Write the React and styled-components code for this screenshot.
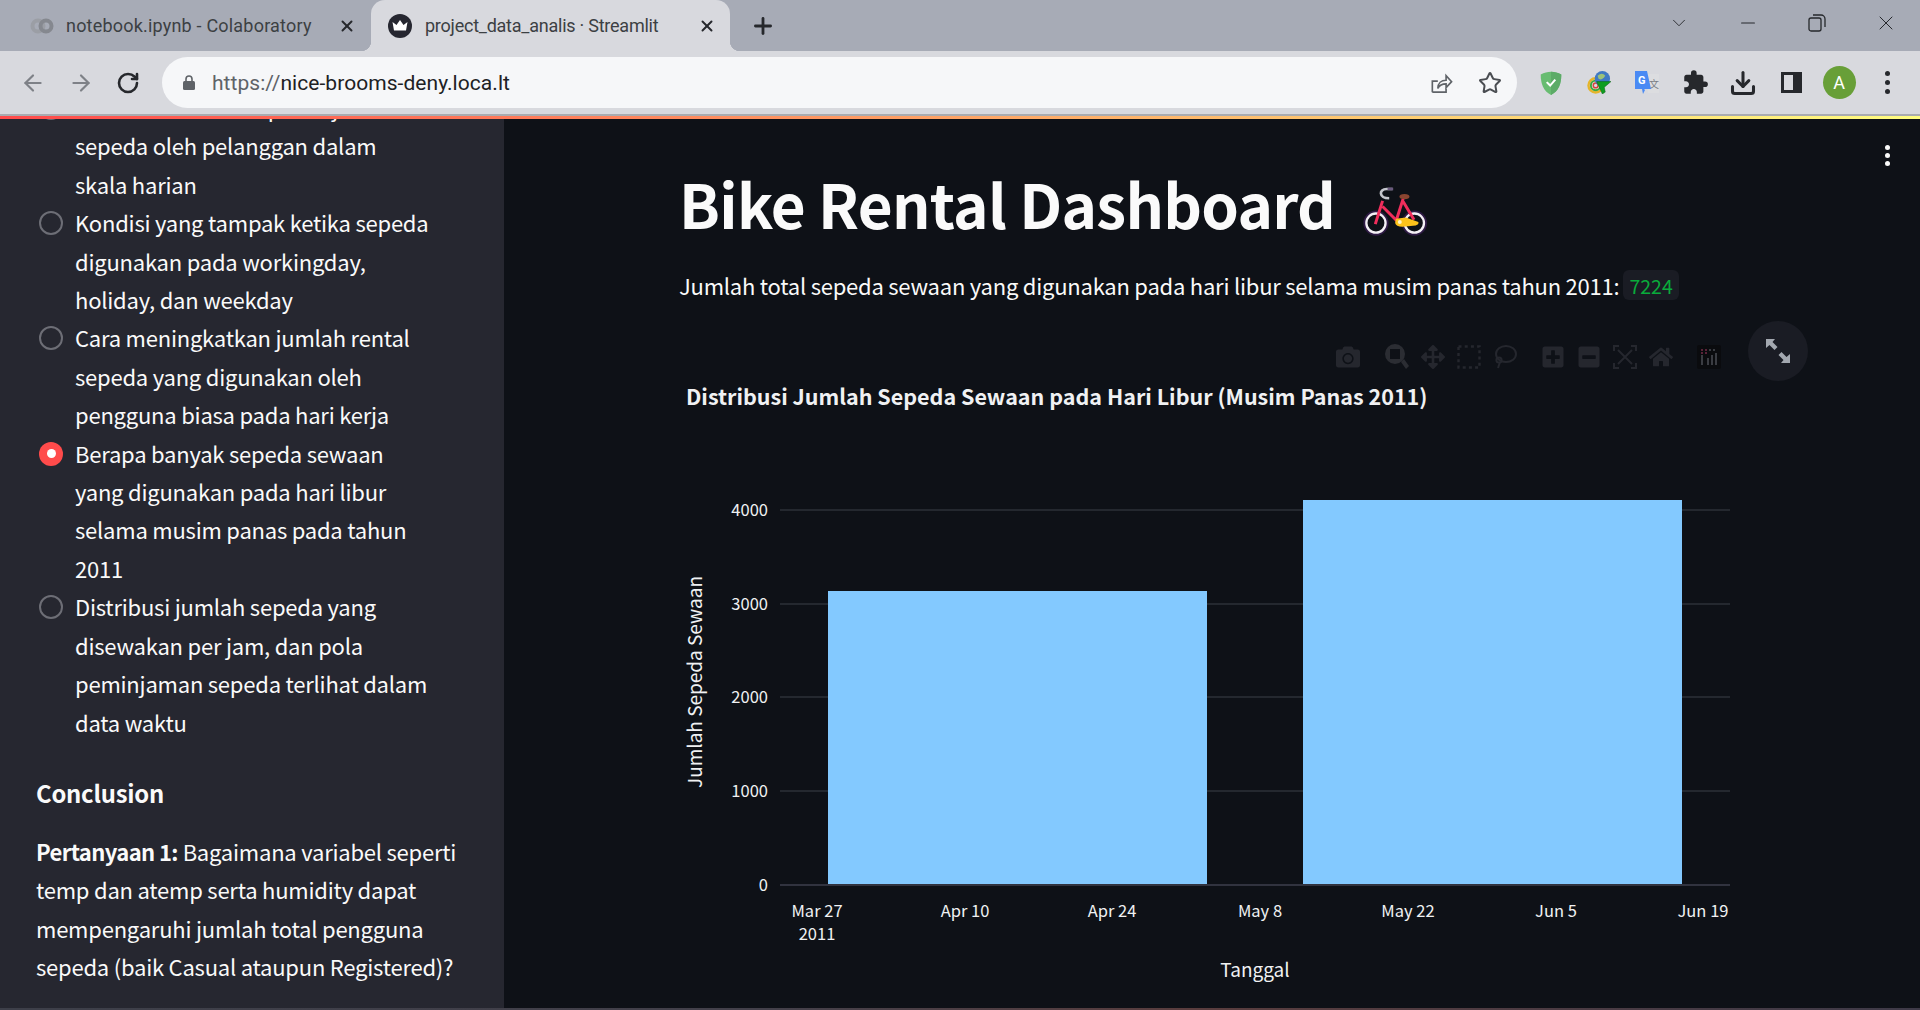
import React from 'react';
import styled, { createGlobalStyle } from 'styled-components';
import { ArrowLeft, ArrowRight, RotateCw, Star, Download, X, Plus, Minus, ChevronDown } from 'lucide-react';
import { FaCamera, FaArrowsAlt, FaPlusSquare, FaMinusSquare, FaHome } from 'react-icons/fa';
import { MdExtension } from 'react-icons/md';

const sansFont = '"Noto Sans CJK SC", "Noto Sans", sans-serif';

const GlobalStyle = createGlobalStyle`
    html, body {
        margin: 0;
        padding: 0;
        height: 100%;
        overflow: hidden;
        background: #0e1117;
    }
`

const Page = styled.div`
    display: flex;
    flex-direction: column;
    height: 1010px;
    overflow: hidden;
`

const TabStrip = styled.div`
    display: flex;
    align-items: stretch;
    height: 51px;
    background: #a7abb6;
    font-family: Roboto, sans-serif;
    font-size: 18px;
    color: #3c4043;
`

const Tab = styled.div`
    position: relative;
    display: flex;
    align-items: center;
    box-sizing: border-box;
    width: ${(props) => props.$width}px;
    padding-left: ${(props) => props.$pad}px;
    padding-right: ${(props) => props.$padRight}px;
    border-radius: 14px 14px 0 0;
    background: ${(props) => (props.$active ? '#d8d9de' : 'transparent')};

    ${(props) => props.$active && `
        &::before, &::after {
            content: '';
            position: absolute;
            bottom: 0;
            width: 10px;
            height: 10px;
        }
        &::before {
            left: -10px;
            background: radial-gradient(circle at 0 0, transparent 10px, #d8d9de 10.5px);
        }
        &::after {
            right: -10px;
            background: radial-gradient(circle at 100% 0, transparent 10px, #d8d9de 10.5px);
        }
    `}
`

const TabTitle = styled.span`
    flex: 1;
    margin-left: ${(props) => props.$gap}px;
    letter-spacing: ${(props) => props.$spacing}px;
    white-space: nowrap;
`

const NewTab = styled.div`
    display: flex;
    align-items: center;
    margin-left: 20px;
    color: #26282c;
`

const WindowButtons = styled.div`
    display: flex;
    align-items: center;
    margin-left: auto;
    padding-bottom: 5px;
    color: #26282c;
`

const WindowButton = styled.div`
    display: flex;
    justify-content: center;
    width: 69px;
`

const Toolbar = styled.div`
    display: flex;
    align-items: center;
    height: 63px;
    background: #d8d9de;
`

const NavButtons = styled.div`
    display: flex;
    align-items: center;
    gap: 22px;
    width: 162px;
    box-sizing: border-box;
    padding-left: 20px;
    color: #7e8187;
`

const Omnibox = styled.div`
    display: flex;
    align-items: center;
    width: 1355px;
    height: 51px;
    box-sizing: border-box;
    padding: 0 15px 0 21px;
    border-radius: 26px;
    background: #f6f7f9;
    font-family: Roboto, sans-serif;
    font-size: 21px;
    color: #202124;
`

const Url = styled.span`
    flex: 1;
    margin-left: 17px;
    letter-spacing: 0.05px;

    span {
        color: #5f6368;
    }
`

const OmniIcons = styled.div`
    display: flex;
    align-items: center;
    gap: 25px;
    color: #5f6368;
`

const Extensions = styled.div`
    display: flex;
    align-items: center;
    padding-left: 10px;
    color: #26282c;
`

const Slot = styled.div`
    display: flex;
    align-items: center;
    justify-content: center;
    width: 48px;
`

const Avatar = styled.div`
    display: flex;
    align-items: center;
    justify-content: center;
    width: 33px;
    height: 33px;
    border-radius: 50%;
    background: #689f38;
    color: #fff;
    font-family: Roboto, sans-serif;
    font-size: 18px;
`

const DotsColumn = styled.div`
    display: flex;
    flex-direction: column;
    gap: ${(props) => props.$gap}px;

    i {
        width: 5px;
        height: 5px;
        border-radius: 50%;
        background: ${(props) => props.$color};
    }
`

const Separator = styled.div`
    height: 2px;
    background: #a9abb0;
`

const Decoration = styled.div`
    height: 3px;
    background: linear-gradient(90deg, #ff4b4b, #fffd80);
`

const Body = styled.div`
    flex: 1;
    display: flex;
    min-height: 0;
    font-family: ${sansFont};
    color: #fafafa;
`

const BottomEdge = styled.div`
    height: 2px;
    background: linear-gradient(90deg, #3d3f49, #43404a 40%, #5a3d3e 62%, #3e3a48);
`

const Sidebar = styled.aside`
    width: 504px;
    flex-shrink: 0;
    overflow: hidden;
    background: #262730;
    font-size: 22px;
    letter-spacing: -0.22px;
    line-height: 38.4px;
`

const SidebarContent = styled.div`
    margin-top: -31px;
    padding-left: 36px;
`

const OptionList = styled.div`
    padding-left: 3px;
`

const Option = styled.div`
    display: flex;
`

const Radio = styled.div`
    flex-shrink: 0;
    display: flex;
    align-items: center;
    justify-content: center;
    box-sizing: border-box;
    width: 24px;
    height: 24px;
    margin-top: 8px;
    margin-right: 12px;
    border-radius: 50%;
    border: ${(props) => (props.$checked ? 'none' : '2px solid #6d6e76')};
    background: ${(props) => (props.$checked ? '#ff4b4b' : 'transparent')};

    &::after {
        content: '';
        display: ${(props) => (props.$checked ? 'block' : 'none')};
        width: 9px;
        height: 9px;
        border-radius: 50%;
        background: #fff;
    }
`

const OptionLines = styled.div`
    span {
        display: block;
        white-space: nowrap;
    }
`

const SidebarHeading = styled.h3`
    margin: 33px 0 20px;
    font-size: 23.8px;
    line-height: 38px;
    font-weight: 600;
`

const SidebarText = styled.p`
    margin: 0;

    span {
        display: block;
        white-space: nowrap;
    }

    b {
        font-weight: 700;
        letter-spacing: -0.6px;
    }
`

const Main = styled.main`
    position: relative;
    flex: 1;
    min-width: 0;
    padding: 46px 0 0 175px;
    background: #0e1117;
`

const MenuWrap = styled.div`
    position: absolute;
    top: 26px;
    right: 30px;
`

const Title = styled.h1`
    display: flex;
    align-items: center;
    height: 80px;
    margin: -2px 0 24px;
    font-size: 60.2px;
    font-weight: 700;
    letter-spacing: -0.7px;
    line-height: 80px;
    white-space: nowrap;

    svg {
        margin-left: 26px;
        margin-top: 16px;
    }
`

const Summary = styled.p`
    display: flex;
    align-items: center;
    height: 38px;
    margin: -1px 0 26px;
    font-size: 22px;
    letter-spacing: -0.23px;
    white-space: nowrap;
`

const Code = styled.code`
    margin-left: 4px;
    padding: 0 6px;
    height: 30px;
    border-radius: 6px;
    background: #1a1c24;
    color: #09ab3b;
    font-family: ${sansFont};
    font-size: 19.5px;
    letter-spacing: 0;
    line-height: 32px;
`

const ChartBox = styled.div`
    position: relative;
    width: 1120px;
    height: 676px;
    margin-left: 1px;

    svg.plot {
        display: block;
    }

    text {
        font-family: ${sansFont};
        fill: #f0f1f3;
    }
`

const Modebar = styled.div`
    position: absolute;
    top: 14px;
    left: 656px;
    display: flex;
    align-items: center;
    color: #25272e;
`

const ModeIcon = styled.div`
    display: flex;
    align-items: center;
    justify-content: center;
    width: ${(props) => props.$w || 36}px;
    margin-right: ${(props) => props.$after || 0}px;
`

const Fullscreen = styled.div`
    position: absolute;
    top: -9px;
    right: -8px;
    display: flex;
    align-items: center;
    justify-content: center;
    width: 60px;
    height: 60px;
    border-radius: 50%;
    background: #1a1c24;
    color: #a3a8b0;
`

const options = [
    { lines: ['Tren dan musiman peminjaman', 'sepeda oleh pelanggan dalam', 'skala harian'] },
    { lines: ['Kondisi yang tampak ketika sepeda', 'digunakan pada workingday,', 'holiday, dan weekday'] },
    { lines: ['Cara meningkatkan jumlah rental', 'sepeda yang digunakan oleh', 'pengguna biasa pada hari kerja'] },
    { lines: ['Berapa banyak sepeda sewaan', 'yang digunakan pada hari libur', 'selama musim panas pada tahun', '2011'], checked: true },
    { lines: ['Distribusi jumlah sepeda yang', 'disewakan per jam, dan pola', 'peminjaman sepeda terlihat dalam', 'data waktu'] },
];

const gridLines = [
    { y: 510, label: '4000' },
    { y: 604, label: '3000' },
    { y: 697, label: '2000' },
    { y: 791, label: '1000' },
];

const xTicks = [
    { x: 817, label: 'Mar 27' },
    { x: 965, label: 'Apr 10' },
    { x: 1112, label: 'Apr 24' },
    { x: 1260, label: 'May 8' },
    { x: 1408, label: 'May 22' },
    { x: 1556, label: 'Jun 5' },
    { x: 1703, label: 'Jun 19' },
];

const ColabIcon = () => (
    <svg width="24" height="16" viewBox="0 0 24 16" fill="none">
        <circle cx="8" cy="8" r="5.5" stroke="#9b9ea5" strokeWidth="4" />
        <circle cx="16" cy="8" r="5.5" stroke="#85888f" strokeWidth="4" />
    </svg>
);

const StreamlitIcon = () => (
    <svg width="24" height="24" viewBox="0 0 24 24">
        <circle cx="12" cy="12" r="12" fill="#262730" />
        <path d="M4.500 8l4 3L12 6l3.500 5 4-3-1.500 8.500H6z" fill="#fff" />
    </svg>
);

const LockIcon = () => (
    <svg width="12" height="15" viewBox="0 0 12 15">
        <path d="M3 6V4a3 3 0 0 1 6 0v2" fill="none" stroke="#5f6368" strokeWidth="1.6" />
        <rect y="6" width="12" height="9" rx="1.500" fill="#5f6368" />
    </svg>
);

const ShareIcon = () => (
    <svg width="23" height="22" viewBox="0 0 24 24" fill="none" stroke="#5f6368" strokeWidth="1.8">
        <path d="M2 22V10h6M2 22h15v-4" />
        <path d="M8 18c0-6 4-9 9-9V4l6 6.500-6 6.500v-4c-4 0-7 1-9 5z" />
    </svg>
);

const ShieldIcon = () => (
    <svg width="24" height="24" viewBox="0 0 24 28">
        <path d="M12 1c4 0 8 1 12 3 0 11-3 19-12 24C3 23 0 15 0 4c4-2 8-3 12-3z" fill="#68bc71" />
        <path d="M12 1c4 0 8 1 12 3 0 11-3 19-12 24z" fill="#5cab67" />
        <path d="M7 13l4 4 6-7" fill="none" stroke="#fff" strokeWidth="2.4" />
    </svg>
);

const IdmIcon = () => (
    <svg width="25" height="23" viewBox="0 0 26 24">
        <circle cx="9" cy="15" r="7.500" fill="none" stroke="#e5b52a" strokeWidth="2.5" />
        <circle cx="9" cy="15" r="5" fill="none" stroke="#3da83a" strokeWidth="2" />
        <circle cx="9" cy="15" r="2.500" fill="none" stroke="#d8453a" strokeWidth="1.5" />
        <circle cx="16" cy="8" r="8" fill="#3f79c4" />
        <path d="M11 5c3-3 6-3 8 0-2 3-4 5-7 3z" fill="#9cc27a" />
        <path d="M10 11h15l-7 6 1 5-3 2z" fill="#0f9d20" stroke="#0b5f14" strokeWidth="0.5" />
    </svg>
);

const TranslateIcon = () => (
    <svg width="24" height="24" viewBox="0 0 24 24">
        <path d="M11 3h13v19H13z" fill="#dcdde0" />
        <text x="14" y="17" fontSize="10" fontFamily="Noto Sans CJK SC, sans-serif" fill="#7a7d85">文</text>
        <path d="M0 0h12l4 18H9l1 1-2 4-1-5H0z" fill="#4a8af4" />
        <text x="3" y="13" fontSize="11" fontWeight="700" fontFamily="Roboto, sans-serif" fill="#fff">G</text>
    </svg>
);

const SidePanelIcon = () => (
    <svg width="21" height="21" viewBox="0 0 21 21">
        <path d="M0 0h21v21H0z" fill="#26282c" />
        <path d="M3 3h9v15H3z" fill="#d8d9de" />
    </svg>
);

const BikeEmoji = () => (
    <svg width="68" height="53" viewBox="65 30 205 160" fill="none">
        <circle cx="110" cy="145" r="33" stroke="#2f1b45" strokeWidth="10" />
        <circle cx="110" cy="145" r="29" stroke="#f4f0f6" strokeWidth="7" />
        <circle cx="226" cy="145" r="33" stroke="#2f1b45" strokeWidth="10" />
        <circle cx="226" cy="145" r="29" stroke="#f4f0f6" strokeWidth="7" />
        <path d="M108 148L130 78M130 95L175 140M192 72L172 135M192 80L225 135" stroke="#f02d5b" strokeWidth="9" />
        <path d="M160 42H142C118 42 118 70 150 70" stroke="#c4c6cc" strokeWidth="8" />
        <path d="M145 42h17" stroke="#6a5a7e" strokeWidth="8" />
        <ellipse cx="196" cy="65" rx="15" ry="8" fill="#8a4530" />
        <path d="M170 132L200 128L238 142Q240 150 230 152L190 156Q170 156 168 145Z" fill="#fcc21b" />
        <circle cx="182" cy="142" r="6" fill="#fff3c4" />
    </svg>
);

const ZoomTool = () => (
    <svg width="24" height="26" viewBox="0 0 24 26" fill="#2b2d33">
        <path d="M10 0a10 10 0 1 0 0 20 10 10 0 0 0 0-20zM5 5h10v10H5z" fillRule="evenodd" />
        <path d="M16 18l3-3 5 7-3 3z" />
    </svg>
);

const BoxSelect = () => (
    <svg width="24" height="24" viewBox="0 0 24 24" fill="none" stroke="#25272e" strokeWidth="2.4" strokeDasharray="3 3.2">
        <rect x="1.500" y="1.500" width="21" height="21" />
    </svg>
);

const Lasso = () => (
    <svg width="24" height="26" viewBox="0 0 24 26" fill="none" stroke="#25272e" strokeWidth="2">
        <ellipse cx="13" cy="10" rx="10" ry="8" />
        <circle cx="6" cy="16" r="2.600" />
        <path d="M7 18l-2 6" />
    </svg>
);

const Autoscale = () => (
    <svg width="24" height="24" viewBox="0 0 24 24" fill="none" stroke="#25272e" strokeWidth="2">
        <path d="M1 6V1h5M18 1h5v5M23 18v5h-5M6 23H1v-5M5 5l14 14M19 5L5 19" />
    </svg>
);

const PlotlyLogo = () => (
    <svg width="24" height="24" viewBox="0 0 24 24">
        <rect width="24" height="24" rx="2" fill="#0a0b0e" />
        <path d="M4 10h2v10H4zM10 13h2v7h-2zM14 10h2v10h-2zM18 8h2v12h-2z" fill="#3a3c42" />
        <path d="M4 4h2v2H4zM8 4h2v2H8zM4 7h2v2H4zM8 7h2v2H8z" fill="#5a2238" />
        <path d="M12 4h2v2h-2zM16 4h2v2h-2z" fill="#3a3c42" />
    </svg>
);

const ExpandIcon = () => (
    <svg width="24" height="24" viewBox="0 0 24 24" fill="currentColor">
        <path d="M0 0h9L6.500 3l5 5-3 3-5-5L0 9z" />
        <path d="M24 24h-9l2.500-3-5-5 3-3 5 5L24 15z" />
    </svg>
);

const App = () => {
    return (
        <Page>
            <GlobalStyle />
            <TabStrip>
                <Tab $width={371} $pad={30} $padRight={15}>
                    <ColabIcon />
                    <TabTitle $gap={12} $spacing={0.2}>notebook.ipynb - Colaboratory</TabTitle>
                    <X size={18} strokeWidth={2.6} color="#26282c" />
                </Tab>
                <Tab $width={359} $pad={17} $padRight={14} $active>
                    <StreamlitIcon />
                    <TabTitle $gap={13} $spacing={-0.24}>project_data_analis · Streamlit</TabTitle>
                    <X size={18} strokeWidth={2.6} color="#26282c" />
                </Tab>
                <NewTab>
                    <Plus size={26} strokeWidth={2.6} />
                </NewTab>
                <WindowButtons>
                    <WindowButton><ChevronDown size={22} strokeWidth={1} /></WindowButton>
                    <WindowButton><Minus size={22} strokeWidth={1.2} /></WindowButton>
                    <WindowButton>
                        <svg width="18" height="18" viewBox="0 0 18 18" fill="none" stroke="currentColor" strokeWidth="1.3">
                            <rect x="1" y="4" width="12" height="13" rx="2" />
                            <path d="M5 1h8a4 4 0 0 1 4 4v8" />
                        </svg>
                    </WindowButton>
                    <WindowButton><X size={24} strokeWidth={1} /></WindowButton>
                </WindowButtons>
            </TabStrip>
            <Toolbar>
                <NavButtons>
                    <ArrowLeft size={26} strokeWidth={2} />
                    <ArrowRight size={26} strokeWidth={2} />
                    <RotateCw size={24} strokeWidth={2.6} color="#26282c" />
                </NavButtons>
                <Omnibox>
                    <LockIcon />
                    <Url><span>https://</span>nice-brooms-deny.loca.lt</Url>
                    <OmniIcons>
                        <ShareIcon />
                        <Star size={24} strokeWidth={2} color="#4a4d52" />
                    </OmniIcons>
                </Omnibox>
                <Extensions>
                    <Slot><ShieldIcon /></Slot>
                    <Slot><IdmIcon /></Slot>
                    <Slot><TranslateIcon /></Slot>
                    <Slot><MdExtension size={27} /></Slot>
                    <Slot><Download size={28} strokeWidth={2.6} /></Slot>
                    <Slot><SidePanelIcon /></Slot>
                    <Slot><Avatar>A</Avatar></Slot>
                    <Slot><DotsColumn $gap={4} $color="#26282c"><i /><i /><i /></DotsColumn></Slot>
                </Extensions>
            </Toolbar>
            <Separator />
            <Decoration />
            <Body>
                <Sidebar>
                    <SidebarContent>
                        <OptionList>
                            {options.map((option) => (
                                <Option key={option.lines[0]}>
                                    <Radio $checked={option.checked} />
                                    <OptionLines>
                                        {option.lines.map((line) => <span key={line}>{line}</span>)}
                                    </OptionLines>
                                </Option>
                            ))}
                        </OptionList>
                        <SidebarHeading>Conclusion</SidebarHeading>
                        <SidebarText>
                            <span><b>Pertanyaan 1:</b> Bagaimana variabel seperti</span>
                            <span>temp dan atemp serta humidity dapat</span>
                            <span>mempengaruhi jumlah total pengguna</span>
                            <span>sepeda (baik Casual ataupun Registered)?</span>
                        </SidebarText>
                    </SidebarContent>
                </Sidebar>
                <Main>
                    <MenuWrap><DotsColumn $gap={3} $color="#fafafa"><i /><i /><i /></DotsColumn></MenuWrap>
                    <Title>Bike Rental Dashboard<BikeEmoji /></Title>
                    <Summary>
                        Jumlah total sepeda sewaan yang digunakan pada hari libur selama musim panas tahun 2011:
                        <Code>7224</Code>
                    </Summary>
                    <ChartBox>
                        <svg className="plot" width="1120" height="676" viewBox="680 330 1120 676">
                            <text x="686" y="405" fontSize="21.5" fontWeight="700">Distribusi Jumlah Sepeda Sewaan pada Hari Libur (Musim Panas 2011)</text>
                            {gridLines.map((line) => (
                                <g key={line.label}>
                                    <line x1="780" x2="1730" y1={line.y} y2={line.y} stroke="#2c3038" strokeWidth="1.5" />
                                    <text x="768" y={line.y + 6} fontSize="16.5" textAnchor="end">{line.label}</text>
                                </g>
                            ))}
                            <rect x="828" y="591" width="379" height="294" fill="#83c9ff" />
                            <rect x="1303" y="500" width="379" height="385" fill="#83c9ff" />
                            <line x1="780" x2="1730" y1="885" y2="885" stroke="#31333f" strokeWidth="2" />
                            <text x="768" y="891" fontSize="16.5" textAnchor="end">0</text>
                            {xTicks.map((tick) => (
                                <text key={tick.label} x={tick.x} y="917" fontSize="16.5" textAnchor="middle">{tick.label}</text>
                            ))}
                            <text x="817" y="940" fontSize="16.5" textAnchor="middle">2011</text>
                            <text x="1255" y="977" fontSize="19" textAnchor="middle">Tanggal</text>
                            <text x="702" y="682" fontSize="19" textAnchor="middle" transform="rotate(-90 702 682)">Jumlah Sepeda Sewaan</text>
                        </svg>
                        <Modebar>
                            <ModeIcon $w={24} $after={19}><FaCamera size={24} /></ModeIcon>
                            <ModeIcon><ZoomTool /></ModeIcon>
                            <ModeIcon><FaArrowsAlt size={24} /></ModeIcon>
                            <ModeIcon><BoxSelect /></ModeIcon>
                            <ModeIcon $after={12}><Lasso /></ModeIcon>
                            <ModeIcon><FaPlusSquare size={24} /></ModeIcon>
                            <ModeIcon><FaMinusSquare size={24} /></ModeIcon>
                            <ModeIcon><Autoscale /></ModeIcon>
                            <ModeIcon $after={12}><FaHome size={24} /></ModeIcon>
                            <ModeIcon><PlotlyLogo /></ModeIcon>
                        </Modebar>
                        <Fullscreen><ExpandIcon /></Fullscreen>
                    </ChartBox>
                </Main>
            </Body>
            <BottomEdge />
        </Page>
    )
}

export default App;
